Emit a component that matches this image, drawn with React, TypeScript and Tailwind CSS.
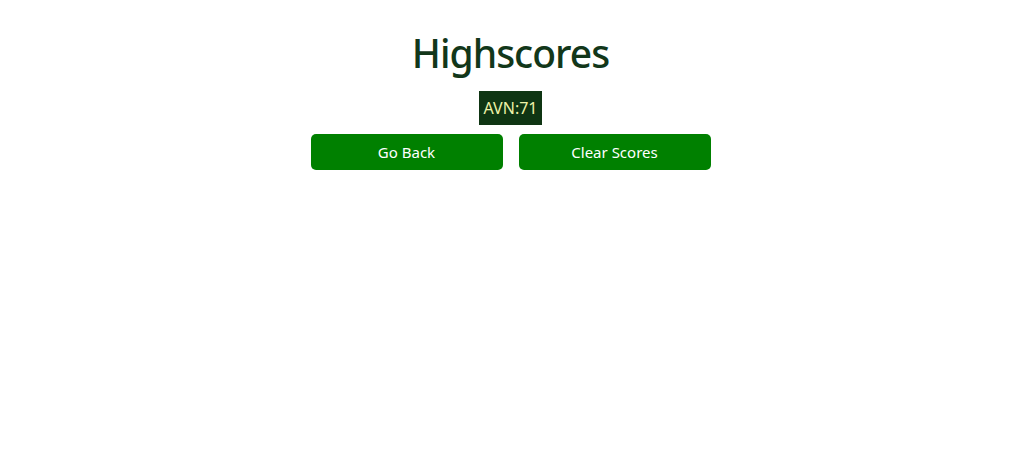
export default function App() {
  return (
    <div className="min-h-screen bg-white flex flex-col items-center pt-[29px] pr-[4px]" style={{ fontFamily: '"Noto Sans", "Open Sans", sans-serif' }}>
      <h1 className="text-[39px] leading-[48px] font-medium tracking-[-1px] text-[#12371a]">Highscores</h1>
      <div className="mt-[14px] h-[34px] px-[5px] flex items-center bg-[#0f3513] text-[#eef2a8] text-[16px]">AVN:71</div>
      <div className="mt-[9px] flex gap-4">
        <button className="w-[192px] h-[36px] rounded-[5px] bg-[#008000] text-white text-[15px]">Go Back</button>
        <button className="w-[192px] h-[36px] rounded-[5px] bg-[#008000] text-white text-[15px]">Clear Scores</button>
      </div>
    </div>
  );
}
